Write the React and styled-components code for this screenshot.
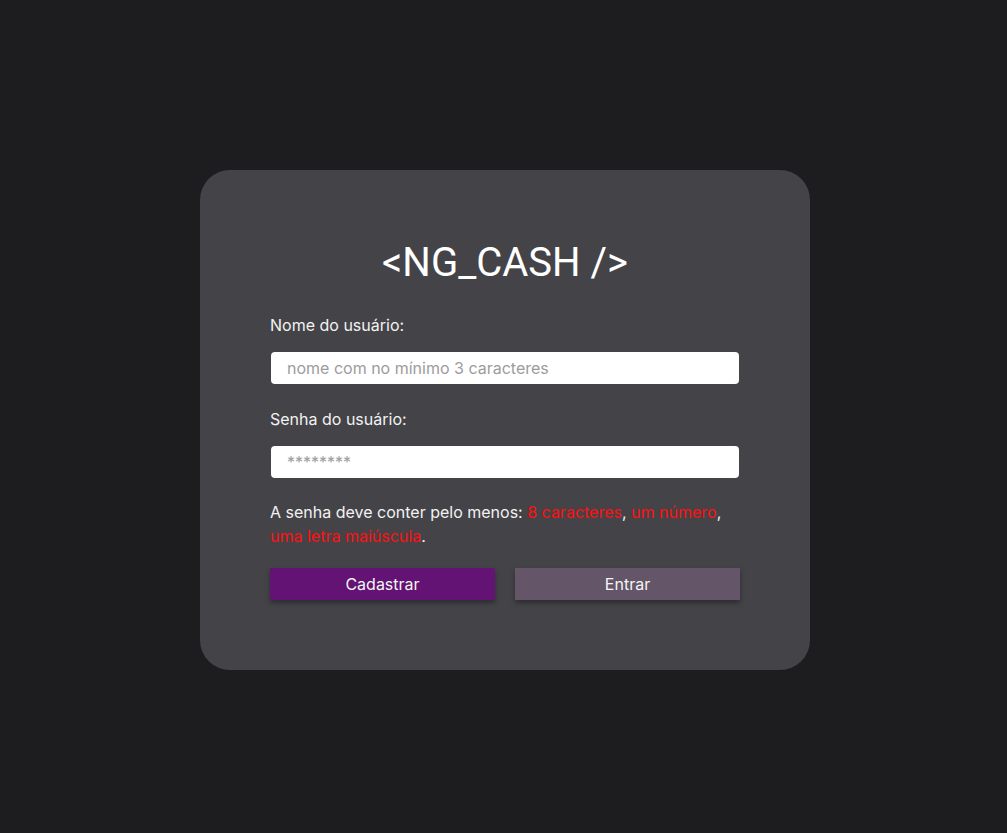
import React from 'react'
import styled, { createGlobalStyle } from 'styled-components'

const GlobalStyle = createGlobalStyle`
	* {
		box-sizing: border-box;
	}
	body {
		margin: 0;
		background: #1d1d1f;
		font-family: Inter, "Noto Sans", sans-serif;
	}
`

function App() {
	return (
		<>
			<GlobalStyle />
			<Page>
				<Card>
					<Title>{'<NG_CASH />'}</Title>
					<Label htmlFor="username">Nome do usuário:</Label>
					<Input id="username" placeholder="nome com no mínimo 3 caracteres" />
					<Label htmlFor="password" $top={25}>
						Senha do usuário:
					</Label>
					<Input id="password" type="password" placeholder="********" />
					<Hint>
						A senha deve conter pelo menos: <Red>8 caracteres</Red>,{' '}
						<Red>um número</Red>, <Red>uma letra maiúscula</Red>.
					</Hint>
					<Buttons>
						<Button $bg="#621373">Cadastrar</Button>
						<Button $bg="#645569">Entrar</Button>
					</Buttons>
				</Card>
			</Page>
		</>
	)
}

export default App

const Page = styled.div`
	min-height: 100vh;
	display: flex;
	align-items: center;
	justify-content: center;
`
const Card = styled.div`
	width: 610px;
	padding: 70px;
	background: #444348;
	border-radius: 30px;
	display: flex;
	flex-direction: column;
	margin-left: 3px;
	margin-top: 7px;
`
const Title = styled.h1`
	margin: 0 0 29px;
	font-family: Roboto, "Liberation Sans", sans-serif;
	font-weight: 400;
	font-size: 40px;
	line-height: 46px;
	color: #ffffff;
	text-align: center;
`
const Label = styled.label`
	margin-top: ${(p) => p.$top || 0}px;
	font-size: 16px;
	line-height: 20px;
	color: #f2f2f2;
`
const Input = styled.input`
	margin: 17px 1px 0;
	height: 32px;
	padding: 0 16px;
	border: none;
	border-radius: 4px;
	background: #ffffff;
	font-family: Inter, sans-serif;
	font-size: 16px;
	color: #222;
	outline: none;
	&::placeholder {
		color: #9c9c9c;
	}
`
const Hint = styled.p`
	margin: 22px 0 0;
	font-size: 16px;
	line-height: 24px;
	color: #f2f2f2;
`
const Red = styled.span`
	color: #ff1010;
`
const Buttons = styled.div`
	margin-top: 20px;
	display: flex;
	gap: 20px;
`
const Button = styled.button`
	flex: 1;
	height: 32px;
	border: none;
	background: ${(p) => p.$bg};
	color: #f4f4f4;
	font-family: Inter, sans-serif;
	font-size: 16px;
	box-shadow: 0 3px 5px rgba(0, 0, 0, 0.35);
	cursor: pointer;
`
